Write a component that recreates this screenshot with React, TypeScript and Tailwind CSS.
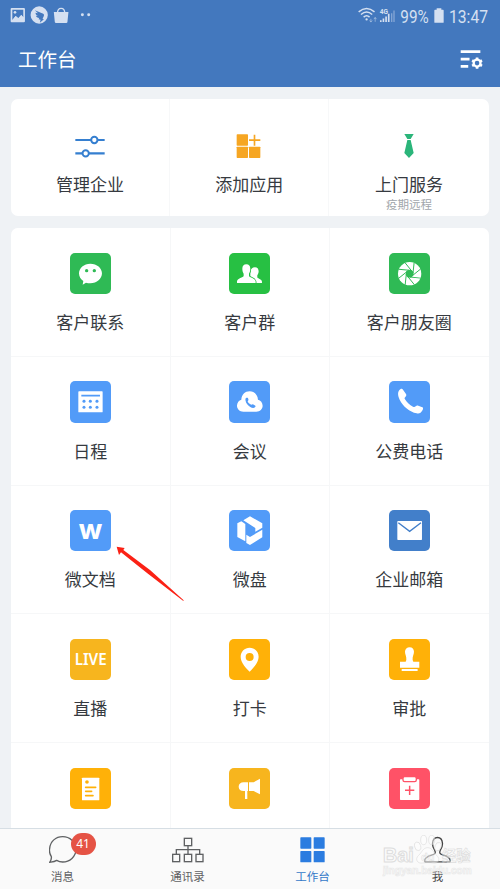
import type { ReactNode } from 'react'

const cjk = "font-['Noto_Sans_CJK_SC',sans-serif]"

type App = {
  id: string
  title?: string
  color: string
  icon: ReactNode
}

const apps: App[] = [
  {
    id: 'contact',
    title: '客户联系',
    color: 'bg-[#2fba55]',
    icon: (
      <>
        <path fill="#fff" d="M61 32c20 0 35 13 35 29S81 91 61 91c-5 0-9-1-13-2l-10 6 2-11C32 79 27 71 27 61c0-16 15-29 34-29z" />
        <circle cx="50" cy="53" r="5" fill="#2fba55" />
        <circle cx="73" cy="53" r="5" fill="#2fba55" />
      </>
    ),
  },
  {
    id: 'group',
    title: '客户群',
    color: 'bg-[#27c043]',
    icon: (
      <>
        <path fill="#fff" d="M78 43c7 0 11 5 11 12 0 6-2 9-4 12v6c0 3 14 6 14 13v4H64V57c1-9 6-14 14-14z" />
        <path fill="#fff" stroke="#27c043" strokeWidth="5" paintOrder="stroke" d="M52 34c8 0 12 5 12 13 0 7-2 12-4 15v7c0 4 20 7 20 17v4H24v-4c0-10 20-13 20-17v-7c-2-3-4-8-4-15 0-8 4-13 12-13z" />
      </>
    ),
  },
  {
    id: 'moments',
    title: '客户朋友圈',
    color: 'bg-[#2fba55]',
    icon: (
      <>
        <circle cx="62" cy="62" r="35" fill="#fff" />
        <circle cx="62" cy="62" r="11" fill="#2fba55" />
        {[0, 45, 90, 135, 180, 225, 270, 315].map((a) => (
          <path key={a} d="M73 60L48 29" stroke="#2fba55" strokeWidth="3" transform={`rotate(${a} 62 62)`} />
        ))}
      </>
    ),
  },
  {
    id: 'calendar',
    title: '日程',
    color: 'bg-[#529bf8]',
    icon: (
      <>
        <rect x="25" y="31" width="73" height="63" rx="2" fill="#fff" />
        <path d="M34 44h56" stroke="#529bf8" strokeWidth="5" />
        {[42, 61, 81].map((x) => (
          <g key={x} fill="#529bf8">
            <circle cx={x} cy="61" r="4.5" />
            <circle cx={x} cy="79" r="4.5" />
          </g>
        ))}
      </>
    ),
  },
  {
    id: 'meeting',
    title: '会议',
    color: 'bg-[#529bf8]',
    icon: (
      <>
        <path fill="#fff" d="M43 92c-11 0-19-8-19-18 0-9 6-16 13-18 1-15 11-25 25-25s24 10 25 25c8 2 14 9 14 18 0 10-8 18-19 18z" />
        <path fill="#529bf8" d="M51 51c4-2 6-1 7 3 1 3 0 5-2 7 2 5 5 8 11 10 3-2 5-2 8 0 5 3 6 5 3 8-4 3-9 2-14-1-7-4-13-11-14-18-1-4-1-7 1-9z" />
      </>
    ),
  },
  {
    id: 'phone',
    title: '公费电话',
    color: 'bg-[#529bf8]',
    icon: (
      <path fill="#fff" d="M34 25c3-2 6-2 8 1l9 13c2 3 1 6-2 9-2 2-3 4-1 7 6 10 14 17 24 22 4 2 6 1 8-1 3-3 5-3 8-2l12 5c3 1 3 4 1 8-5 9-10 12-18 10-21-5-41-20-51-41-7-14-6-26 2-31z" />
    ),
  },
  {
    id: 'doc',
    title: '微文档',
    color: 'bg-[#529bf8]',
    icon: (
      <text x="61.5" y="86" textAnchor="middle" textLength="72" lengthAdjust="spacingAndGlyphs" className="fill-white font-['Inter',sans-serif] text-[62px] font-extrabold">
        W
      </text>
    ),
  },
  {
    id: 'drive',
    title: '微盘',
    color: 'bg-[#529bf8]',
    icon: (
      <g fill="#fff">
        <path d="M43 31l20-12 37 21v13L79 65V54z" />
        <path d="M25 40l12-6 12 8v52L25 81z" />
        <path d="M100 59v23l-37 23-11-6V74l11 7z" />
      </g>
    ),
  },
  {
    id: 'mail',
    title: '企业邮箱',
    color: 'bg-[#427fca]',
    icon: (
      <>
        <rect x="25" y="33" width="74" height="57" rx="2" fill="#fff" />
        <path d="M28 38l34 26 34-26" fill="none" stroke="#427fca" strokeWidth="4" />
      </>
    ),
  },
  {
    id: 'live',
    title: '直播',
    color: 'bg-[#f7b51e]',
    icon: (
      <text x="62" y="79" textAnchor="middle" textLength="96" lengthAdjust="spacingAndGlyphs" className="fill-white font-['Noto_Sans',sans-serif] text-[49px] font-semibold">
        LIVE
      </text>
    ),
  },
  {
    id: 'checkin',
    title: '打卡',
    color: 'bg-[#ffb108]',
    icon: (
      <path fill="#fff" fillRule="evenodd" d="M62 26c15 0 27 12 27 27 0 12-8 27-27 45C43 80 35 65 35 53c0-15 12-27 27-27zm0 16a12 12 0 1 0 0 24 12 12 0 0 0 0-24z" />
    ),
  },
  {
    id: 'approval',
    title: '审批',
    color: 'bg-[#ffb108]',
    icon: (
      <g fill="#fff">
        <path d="M62 25c8 0 13 6 13 13 0 8-5 14-4 25l2 5h18v18H33V68h17l2-5c1-11-4-17-4-25 0-7 6-13 14-13z" />
        <rect x="38" y="90" width="48" height="6" rx="1" />
      </g>
    ),
  },
  {
    id: 'report',
    color: 'bg-[#ffb108]',
    icon: (
      <>
        <rect x="36" y="29" width="52" height="68" rx="2" fill="#fff" />
        <circle cx="51" cy="42" r="5.5" fill="#ffb108" />
        <path d="M47 58h30M47 70h18M47 83h22" stroke="#ffb108" strokeWidth="5" strokeLinecap="round" />
      </>
    ),
  },
  {
    id: 'notice',
    color: 'bg-[#f7b51e]',
    icon: (
      <g fill="#fff">
        <path d="M57 43v26h-2v24h-7V69h-4c-9 0-15-5-15-13s6-13 15-13z" />
        <path d="M60 43h14l19-11v47L74 69H60z" />
      </g>
    ),
  },
  {
    id: 'health',
    color: 'bg-[#ff5267]',
    icon: (
      <>
        <rect x="33" y="34" width="58" height="62" rx="2" fill="#fff" />
        <rect x="42" y="26" width="40" height="15" rx="5" fill="#fff" stroke="#ff5267" strokeWidth="4" />
        <path d="M62 53v28M48 67h28" stroke="#ff5267" strokeWidth="4.5" />
      </>
    ),
  },
]

function StatusBar() {
  return (
    <div className="flex h-[30px] items-end pl-[10px] pr-3 text-[#d5e0f1]">
      <svg viewBox="0 0 250 60" className="mb-[5px] h-5 w-[83px]" fill="currentColor">
        <path fillRule="evenodd" d="M5 9h37q3 0 3 3v37q0 3-3 3H5q-3 0-3-3V12q0-3 3-3zM7 14v31l10-12 8 7 9-10 6 7V14z" />
        <circle cx="15" cy="22" r="4" />
        <path d="M7 46l10-13 8 7 9-10 7 8v9H7z" />
        <circle cx="88" cy="30" r="26" />
        <path fill="#4378be" d="M75 16l25 10c3 2 3 5 1 9l-3 6 4 2-12 10 2-9-6-1 2-4c-6-1-8-3-10-7l6 1c-6-3-7-6-7-10l7 2z" />
        <path d="M132 21h44l-3 30q0 3-4 3h-30q-4 0-4-3z" />
        <path d="M143 25c0-20 22-20 22 0" fill="none" stroke="currentColor" strokeWidth="4" />
        <circle cx="218" cy="29" r="4.5" />
        <circle cx="237" cy="29" r="4.5" />
      </svg>
      <svg viewBox="0 0 112 50" className="mb-[6px] ml-auto h-[17px] w-[37px]" fill="none" stroke="currentColor" strokeWidth="4.5">
        <path d="M2 14Q26-6 50 14M9 22q17-15 34 0M17 30q9-8 18 0" />
        <circle cx="26" cy="37" r="3.5" fill="currentColor" stroke="none" />
        <path d="M39 35v9m-4-4l4 5 4-5M52 44v-13m-4 5l4-5 4 5" strokeWidth="2.5" opacity=".6" />
        <path d="M69 45v-6M77 45V34M85 45V28M93 45V20" strokeWidth="5" />
        <path d="M102 45V18M109 45V10" strokeWidth="4" opacity=".45" />
        <text x="66" y="19" className="fill-[#d5e0f1] font-['Roboto',sans-serif] text-[20px] font-bold" stroke="none">4G</text>
      </svg>
      <svg viewBox="0 0 88 54" className="mb-[5px] ml-[5px] h-[18px] w-[29px] overflow-visible">
        <text x="1" y="47" textLength="86" lengthAdjust="spacingAndGlyphs" className="fill-[#d5e0f1] font-['Roboto',sans-serif] text-[54px]">99%</text>
      </svg>
      <svg viewBox="0 0 30 44" className="mb-[7px] ml-[5px] h-[15px] w-[10px]" fill="currentColor">
        <path d="M8 0h14v5h5q2 0 2 2v35q0 2-2 2H3q-2 0-2-2V7q0-2 2-2h5z" />
      </svg>
      <svg viewBox="0 0 117 54" className="mb-[5px] ml-[5px] h-[18px] w-[39px] overflow-visible">
        <text x="0" y="47" textLength="117" lengthAdjust="spacingAndGlyphs" className="fill-[#d5e0f1] font-['Roboto',sans-serif] text-[54px]">13:47</text>
      </svg>
    </div>
  )
}

function Header() {
  return (
    <header className="h-[87px] bg-[#4378be]">
      <StatusBar />
      <div className="flex h-[58px] items-center justify-between pl-[18px] pr-[17px]">
        <h1 className="text-[19.5px] leading-[58px] text-white">工作台</h1>
        <svg viewBox="0 0 68 58" className="h-[19px] w-[23px] overflow-visible" fill="none" stroke="#fff" strokeWidth="8">
          <path d="M1 5h60M1 28h27M1 50h23" />
          <circle cx="51" cy="40" r="10.5" strokeWidth="7" />
          <path d="M51 23v6M51 51v6M36 31.500l5 3M61 45.500l5 3M36 48.500l5-3M61 34.500l5-3" strokeWidth="8" />
        </svg>
      </div>
    </header>
  )
}

function TopCard() {
  const cell = 'flex h-[117px] flex-col items-center pt-[33px]'
  const label = 'mt-[14px] text-[17px] leading-6'
  return (
    <section className="grid grid-cols-3 divide-x divide-[#f7f8f9] overflow-hidden rounded-[7px] bg-white">
      <div className={cell}>
        <svg viewBox="0 0 90 78" className="h-[26px] w-[30px]" fill="none" stroke="#357fd0" strokeWidth="6.5">
          <path d="M1 24h88M1 64h88" />
          <circle cx="58" cy="24" r="9.5" fill="#fff" strokeWidth="6" />
          <circle cx="32" cy="64" r="9.5" fill="#fff" strokeWidth="6" />
        </svg>
        <div className={label}>管理企业</div>
      </div>
      <div className={cell}>
        <svg viewBox="0 0 78 78" className="h-[26px] w-[26px]" fill="#f6a623">
          <rect x="2" y="7" width="34" height="34" rx="2" />
          <rect x="2" y="44" width="34" height="34" rx="2" />
          <rect x="39" y="44" width="34" height="34" rx="2" />
          <path d="M53 8h5v14h15v5H58v14h-5V27H39v-5h14z" />
        </svg>
        <div className={label}>添加应用</div>
      </div>
      <div className={cell}>
        <svg viewBox="0 0 36 78" className="h-[26px] w-[12px]" fill="#2bb57a">
          <path d="M4 6h28l-9 15H13zM13 24h10l9 39-14 15L4 63z" />
        </svg>
        <div className={label}>上门服务</div>
        <div className="text-[11.5px] leading-4 text-[#a1a6ab]">疫期远程</div>
      </div>
    </section>
  )
}

function AppGrid() {
  return (
    <section className="mt-3 grid grid-cols-3 gap-px overflow-hidden rounded-t-[7px] bg-[#f6f7f8]">
      {apps.map((app) => (
        <div key={app.id} className="flex h-[127.75px] flex-col items-center bg-white pt-[24.7px]">
          <div className={`h-[41.3px] w-[41.3px] shrink-0 overflow-hidden rounded-[5px] ${app.color}`}>
            <svg viewBox="0 0 124 124" className="h-full w-full">
              {app.icon}
            </svg>
          </div>
          {app.title && <div className="mt-4 text-[17px] leading-6">{app.title}</div>}
        </div>
      ))}
    </section>
  )
}

function TabBar() {
  const tab = 'flex flex-1 flex-col items-center pt-[7px]'
  const label = 'text-[11.5px] leading-[16px]'
  return (
    <nav className="relative flex h-[61px] border-t border-[#d6dee4] bg-[#fafafa] text-[#5f6163]">
      <div className={tab}>
        <div className="relative h-8">
          <svg viewBox="0 0 84 90" className="h-[30px] w-[28px]" fill="none" stroke="currentColor" strokeWidth="4">
            <path d="M2 79c5-7 6-11 5-17-5-8-7-15-5-25C4 16 20 2 41 2s40 16 40 38-19 38-40 38c-8 0-13-2-18-5-7 5-13 5-21 6z" strokeLinejoin="round" />
          </svg>
          <span className="absolute -top-[3px] left-[22px] flex h-[22px] w-[25px] items-center justify-center rounded-full bg-[#e55345] font-['Noto_Sans',sans-serif] text-[12px] text-white">41</span>
        </div>
        <span className={label}>消息</span>
      </div>
      <div className={tab}>
        <div className="h-8">
          <svg viewBox="0 0 96 90" className="h-[30px] w-[32px]" fill="none" stroke="currentColor" strokeWidth="4">
            <rect x="37" y="7" width="22" height="22" />
            <path d="M48 29v26M13 55V41h70v14" />
            <rect x="2" y="55" width="21" height="22" />
            <rect x="37" y="55" width="22" height="22" />
            <rect x="72" y="55" width="21" height="22" />
          </svg>
        </div>
        <span className={label}>通讯录</span>
      </div>
      <div className={`${tab} text-[#3478c8]`}>
        <div className="h-8">
          <svg viewBox="0 0 75 90" className="h-[30px] w-[25px]" fill="#2b7ce0">
            <rect x="1" y="4" width="33" height="34" rx="2" />
            <rect x="41" y="4" width="33" height="34" rx="2" />
            <rect x="1" y="45" width="33" height="34" rx="2" />
            <rect x="41" y="45" width="33" height="34" rx="2" />
          </svg>
        </div>
        <span className={label}>工作台</span>
      </div>
      <div className={`${tab} text-[#444]`}>
        <div className="h-8">
          <svg viewBox="0 0 82 90" className="h-[30px] w-[27px]" fill="none" stroke="currentColor" strokeWidth="4">
            <path d="M3 78c-4-10 7-17 22-21 8-2 11-6 8-13-5-7-8-14-7-23C27 10 33 4 41 4s14 6 15 17c1 9-2 16-7 23-3 7 0 11 8 13 15 4 26 11 22 21z" strokeLinejoin="round" />
          </svg>
        </div>
        <span className={label}>我</span>
      </div>
      <Watermark />
    </nav>
  )
}

// site mark laid over the last tab
function Watermark() {
  return (
    <svg viewBox="0 0 276 135" className="absolute left-[382px] top-[5px] h-[45px] w-[92px] opacity-75" fill="#fff" stroke="#d4d4d4">
      <g fillOpacity=".6" strokeWidth="3">
        <text x="3" y="84" textLength="92" lengthAdjust="spacingAndGlyphs" className="font-['Liberation_Sans',sans-serif] text-[58px] font-bold">Bai</text>
        <text x="180" y="82" textLength="86" className="font-['Noto_Sans_CJK_SC',sans-serif] text-[43px] font-bold" strokeWidth="2">经验</text>
      </g>
      <g strokeWidth="2" fillOpacity=".65">
        <ellipse cx="107" cy="37" rx="9" ry="13" transform="rotate(-15 107 37)" />
        <ellipse cx="125" cy="18" rx="9" ry="14" />
        <ellipse cx="149" cy="18" rx="9" ry="14" />
        <ellipse cx="168" cy="38" rx="9" ry="13" transform="rotate(20 168 38)" />
        <path d="M137 41c14 0 17 15 27 23 13 12 4 26-11 23-11-2-19-2-31 0-15 3-25-11-12-23 10-9 13-23 27-23z" />
        <text x="117" y="80" textLength="40" lengthAdjust="spacingAndGlyphs" className="font-['Liberation_Sans',sans-serif] text-[32px] font-bold" strokeWidth="1.500">du</text>
      </g>
      <text x="3" y="120" textLength="266" lengthAdjust="spacingAndGlyphs" className="font-['Liberation_Sans',sans-serif] text-[32px] font-bold" fillOpacity=".3" stroke="#e2e2e2" strokeWidth="2">jingyan.baidu.com</text>
    </svg>
  )
}

export default function Workbench() {
  return (
    <div className={`relative flex h-[889px] w-[500px] flex-col overflow-hidden bg-[#eff2f5] text-[#363a40] ${cjk}`}>
      <Header />
      <main className="min-h-0 flex-1 overflow-hidden pl-[11px] pr-[11.5px] pt-3">
        <TopCard />
        <AppGrid />
      </main>
      <TabBar />
      <svg viewBox="0 0 204 168" className="absolute left-[116px] top-[546px] h-[56px] w-[68px]">
        <path fill="#fb2115" d="M2 2l24 4-4 6 80 60 101 91-1 2L94 82 15 19l-6 8z" />
      </svg>
    </div>
  )
}
